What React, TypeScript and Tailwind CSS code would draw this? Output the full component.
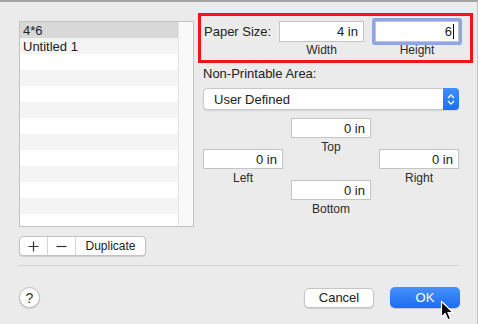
import React from 'react';

const rows = ['4*6', 'Untitled 1', '', '', '', '', '', '', '', '', '', '', ''];

const Field = ({ value }: { value: string }) => (
  <div className="h-[20px] w-[80px] bg-white border border-[#c4c4c4] flex items-center justify-end pr-[5px] text-[13px] leading-none">
    {value}
  </div>
);

const Caption = ({ text, className = '' }: { text: string; className?: string }) => (
  <div className={`text-[12px] leading-[14px] text-[#2a2a2a] text-center ${className}`}>{text}</div>
);

export default function App() {
  return (
    <div className="relative w-[478px] h-[324px] overflow-hidden bg-[#ebebeb] border-t-2 border-[#a3a3a3] border-r border-r-[#c6c6c6] font-['Liberation_Sans',Arial,sans-serif] text-[13px] text-[#222]">
      {/* top area */}
      <div className="flex pl-[19px]">
        {/* left: preset list */}
        <div className="w-[175px] mt-[19px] flex flex-col">
          <div className="h-[206px] border border-[#c2c2c2] bg-white flex overflow-hidden">
            <div className="flex-1 flex flex-col">
              {rows.map((r, i) => (
                <div
                  key={i}
                  className={`h-[16px] shrink-0 pl-[3px] flex items-center leading-none ${
                    i === 0 ? 'bg-[#d8d8d8]' : i % 2 === 1 ? 'bg-[#f4f4f4]' : 'bg-white'
                  }`}
                >
                  {r}
                </div>
              ))}
            </div>
            <div className="w-[15px] bg-[#f9f9f9] border-l border-[#e4e4e4]" />
          </div>
          <div className="mt-[9px] h-[20px] w-[127px] flex bg-white border border-[#c2c2c2] rounded-[4px] shadow-[0_1px_1px_rgba(0,0,0,0.12)]">
            <div className="w-[28px] flex items-center justify-center border-r border-[#d4d4d4]">
              <svg width="11" height="11" viewBox="0 0 11 11">
                <path d="M5.5 0.5v10M0.5 5.5h10" stroke="#333" strokeWidth="1.2" />
              </svg>
            </div>
            <div className="w-[28px] flex items-center justify-center border-r border-[#d4d4d4]">
              <svg width="11" height="11" viewBox="0 0 11 11">
                <path d="M0.5 5.5h10" stroke="#333" strokeWidth="1.2" />
              </svg>
            </div>
            <div className="flex-1 flex items-center justify-center text-[12px] leading-none">Duplicate</div>
          </div>
        </div>

        {/* right: settings */}
        <div className="w-[275px] ml-[4px] mt-[11px] flex flex-col">
          <div className="h-[50px] border-[3px] border-[#f51414] pl-[3px] pt-[5px] flex items-start">
            <div className="w-[75px] h-[21px] flex items-center">Paper Size:</div>
            <div className="w-[85px] flex flex-col">
              <div className="h-[21px] bg-white border border-[#c4c4c4] flex items-center justify-end pr-[5px] leading-none">4 in</div>
              <Caption text="Width" className="mt-[1px]" />
            </div>
            <div className="w-[84px] ml-[11px] flex flex-col">
              <div className="h-[21px] bg-white border border-[#c4c4c4] shadow-[0_0_0_3px_#8ea6e6] rounded-[1px] flex items-center justify-end pr-[4px] leading-none">
                6<span className="ml-[1px] w-[1px] h-[15px] bg-black" />
              </div>
              <Caption text="Height" className="mt-[1px]" />
            </div>
          </div>

          <div className="pl-[5px] mt-[3px] h-[15px] flex items-center">Non-Printable Area:</div>

          <div className="ml-[5px] mt-[7px] w-[256px] h-[22px] bg-white rounded-[4px] border border-[#c8c8c8] shadow-[0_1px_1px_rgba(0,0,0,0.1)] flex">
            <div className="flex-1 pl-[10px] flex items-center leading-none">User Defined</div>
            <div className="w-[16px] -my-px -mr-px rounded-r-[4px] bg-gradient-to-b from-[#3f8efc] to-[#1c6ff2] flex items-center justify-center">
              <svg width="8" height="13" viewBox="0 0 8 13">
                <path d="M1 5L4 2L7 5M1 8L4 11L7 8" fill="none" stroke="white" strokeWidth="1.3" />
              </svg>
            </div>
          </div>

          <div className="ml-[5px] mt-[8px] flex gap-[8px]">
            <div className="w-[80px] pt-[31px] flex flex-col">
              <Field value="0 in" />
              <Caption text="Left" className="mt-[2px]" />
            </div>
            <div className="w-[80px] flex flex-col">
              <Field value="0 in" />
              <Caption text="Top" className="mt-[2px]" />
              <div className="mt-[26px]">
                <Field value="0 in" />
              </div>
              <Caption text="Bottom" className="mt-[2px]" />
            </div>
            <div className="w-[80px] pt-[31px] flex flex-col">
              <Field value="0 in" />
              <Caption text="Right" className="mt-[2px]" />
            </div>
          </div>
        </div>
      </div>

      {/* separator */}
      <div className="ml-[19px] mt-[9px] w-[440px] h-px bg-[#d2d2d2]" />

      {/* footer */}
      <div className="mt-[21px] pl-[19px] pr-[17px] flex items-center">
        <div className="w-[21px] h-[21px] rounded-full bg-white border border-[#bdbdbd] shadow-[0_1px_1px_rgba(0,0,0,0.15)] flex items-center justify-center text-[14px] leading-none text-[#333]">
          ?
        </div>
        <div className="flex-1" />
        <div className="w-[70px] h-[20px] bg-white border border-[#c4c4c4] rounded-[5px] shadow-[0_1px_1px_rgba(0,0,0,0.12)] flex items-center justify-center leading-none">
          Cancel
        </div>
        <div className="ml-[16px] w-[70px] h-[21px] rounded-[5px] bg-gradient-to-b from-[#4791fd] to-[#1a6cf1] text-white flex items-center justify-center leading-none shadow-[0_1px_1px_rgba(0,0,0,0.15)]">
          OK
        </div>
      </div>

      {/* mouse pointer */}
      <svg className="absolute left-[440px] top-[298px]" width="15" height="22" viewBox="0 0 15 22">
        <path
          d="M1.5 1.5 L1.5 17 L5.2 13.4 L8 19.8 L10.6 18.7 L7.9 12.5 L13 12.5 Z"
          fill="black"
          stroke="white"
          strokeWidth="1.2"
          strokeLinejoin="round"
        />
      </svg>
    </div>
  );
}
